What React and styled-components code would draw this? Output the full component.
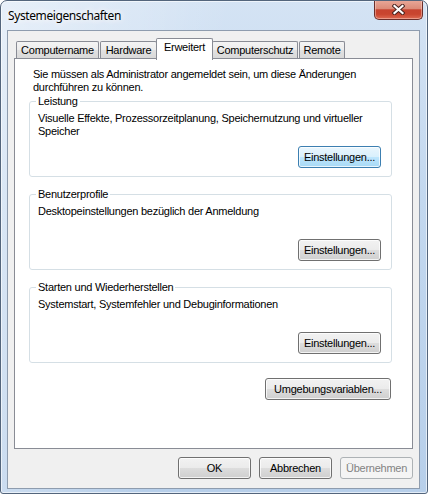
import styled, { createGlobalStyle } from 'styled-components';

const GlobalStyle = createGlobalStyle`
  html, body {
    margin: 0;
    padding: 0;
    background: #fff;
  }
  body {
    font-family: "Liberation Sans", Arial, sans-serif;
    font-size: 11px;
    letter-spacing: -0.25px;
    color: #000;
  }
`;

const Window = styled.div`
  box-sizing: border-box;
  width: 428px;
  height: 494px;
  padding: 0 7px 4px 6px;
  display: flex;
  flex-direction: column;
  border: 1px solid #53657c;
  border-radius: 7px 7px 3px 3px;
  background:
    linear-gradient(100deg, rgba(255, 255, 255, 0.45) 0%, rgba(255, 255, 255, 0) 45%),
    linear-gradient(180deg, #d4e3f4 0%, #c3d8ef 40%, #b7cfea 100%);
  box-shadow: inset 0 0 0 1px rgba(255, 255, 255, 0.6);
  overflow: hidden;
`;

const TitleBar = styled.div`
  height: 29px;
  display: flex;
  align-items: flex-start;
  justify-content: space-between;
`;

const Title = styled.div`
  padding: 7px 0 0 1px;
  font-family: "Noto Sans", "Open Sans", sans-serif;
  font-size: 12px;
  letter-spacing: -0.4px;
  line-height: 16px;
  text-shadow: 0 0 6px #fff, 0 0 10px #fff, 0 0 14px rgba(255, 255, 255, 0.8);
`;

const CloseButton = styled.div`
  box-sizing: border-box;
  width: 49px;
  height: 20px;
  margin: -1px -3px 0 0;
  display: flex;
  align-items: center;
  justify-content: center;
  border: 1px solid #6b2e2a;
  border-top: none;
  border-radius: 0 0 5px 5px;
  background: linear-gradient(180deg, #e9a99a 0%, #dc8b78 45%, #c7432f 52%, #c9452f 75%, #de6a52 100%);
  box-shadow: inset 0 0 0 1px rgba(255, 220, 210, 0.45);
`;

const Client = styled.div`
  flex: 1;
  display: flex;
  flex-direction: column;
  padding: 7px 6px 0;
  border: 1px solid #8e9cae;
  background: #f0f0f0;
`;

const TabRow = styled.div`
  height: 20px;
  display: flex;
  align-items: flex-end;
  gap: 1px;
  padding-left: 2px;
`;

const Tab = styled.div`
  box-sizing: border-box;
  width: ${p => p.$w}px;
  height: ${p => (p.$active ? 22 : 17)}px;
  margin: ${p => (p.$active ? '0 -2px -2px' : '0')};
  padding-bottom: ${p => (p.$active ? 5 : 1)}px;
  display: flex;
  align-items: center;
  justify-content: center;
  border: 1px solid #898c95;
  border-bottom: none;
  border-radius: 2px 2px 0 0;
  background: ${p =>
    p.$active ? '#fff' : 'linear-gradient(180deg, #f4f4f4 0%, #ececec 50%, #e1e1e1 51%, #d9d9d9 100%)'};
  position: ${p => (p.$active ? 'relative' : 'static')};
  z-index: ${p => (p.$active ? 1 : 0)};
  white-space: nowrap;
`;

const Panel = styled.div`
  box-sizing: border-box;
  height: 391px;
  padding: 9px 20px 0 14px;
  display: flex;
  flex-direction: column;
  border: 1px solid #898c95;
  background: #fff;
`;

const Intro = styled.p`
  margin: 0;
  padding: 0 4px;
  line-height: 13px;
`;

const Group = styled.fieldset`
  margin: ${p => (p.$first ? 1 : 11)}px 0 0;
  padding: 4px 10px 8px 8px;
  border: 1px solid #d5dfe5;
  border-radius: 3px;
  min-width: 0;
`;

const Legend = styled.legend`
  margin-left: -2px;
  padding: 0 2px;
  line-height: 13px;
`;

const Desc = styled.p`
  margin: 0;
  min-height: 26px;
  line-height: 13px;
`;

const ButtonRow = styled.div`
  display: flex;
  justify-content: flex-end;
  gap: 8px;
  margin-top: ${p => p.$top || 0}px;
  padding-right: ${p => p.$right || 0}px;
`;

const Button = styled.div`
  box-sizing: border-box;
  width: ${p => p.$w}px;
  height: 22px;
  display: flex;
  align-items: center;
  justify-content: center;
  border: 1px solid ${p => (p.$hot ? '#3c7fb1' : p.$disabled ? '#adb2b5' : '#707070')};
  border-radius: 3px;
  color: ${p => (p.$disabled ? '#838383' : '#000')};
  background: ${p =>
    p.$hot
      ? 'linear-gradient(180deg, #eaf6fd 0%, #d9f0fc 50%, #bee6fd 51%, #a7d9f5 100%)'
      : p.$disabled
      ? '#f4f4f4'
      : 'linear-gradient(180deg, #f2f2f2 0%, #ebebeb 50%, #dddddd 51%, #cfcfcf 100%)'};
  box-shadow: inset 0 0 0 1px ${p => (p.$disabled ? '#f4f4f4' : 'rgba(255, 255, 255, 0.75)')};
  white-space: nowrap;
`;

const CloseIcon = () => (
  <svg width="13" height="11" viewBox="0 0 13 11">
    <path d="M2.5 2 L10.5 9 M10.5 2 L2.5 9" stroke="#4a2420" strokeWidth="4.2" strokeLinecap="square" fill="none" />
    <path d="M2.5 2 L10.5 9 M10.5 2 L2.5 9" stroke="#fff" strokeWidth="2.2" strokeLinecap="square" fill="none" />
  </svg>
);

const tabs = [
  { label: 'Computername', w: 83 },
  { label: 'Hardware', w: 57 },
  { label: 'Erweitert', w: 57, active: true },
  { label: 'Computerschutz', w: 86 },
  { label: 'Remote', w: 46 },
];

const groups = [
  {
    title: 'Leistung',
    text: ['Visuelle Effekte, Prozessorzeitplanung, Speichernutzung und virtueller', 'Speicher'],
    hot: true,
  },
  { title: 'Benutzerprofile', text: ['Desktopeinstellungen bezüglich der Anmeldung'] },
  { title: 'Starten und Wiederherstellen', text: ['Systemstart, Systemfehler und Debuginformationen'] },
];

export default function App() {
  return (
    <>
      <GlobalStyle />
      <Window>
        <TitleBar>
          <Title>Systemeigenschaften</Title>
          <CloseButton>
            <CloseIcon />
          </CloseButton>
        </TitleBar>
        <Client>
          <TabRow>
            {tabs.map(t => (
              <Tab key={t.label} $w={t.w} $active={t.active}>
                {t.label}
              </Tab>
            ))}
          </TabRow>
          <Panel>
            <Intro>
              Sie müssen als Administrator angemeldet sein, um diese Änderungen
              <br />
              durchführen zu können.
            </Intro>
            {groups.map((g, i) => (
              <Group key={g.title} $first={i === 0}>
                <Legend>{g.title}</Legend>
                <Desc>
                  {g.text.map((line, j) => (
                    <span key={j}>
                      {j > 0 && <br />}
                      {line}
                    </span>
                  ))}
                </Desc>
                <ButtonRow $top={8}>
                  <Button $w={83} $hot={g.hot}>Einstellungen...</Button>
                </ButtonRow>
              </Group>
            ))}
            <ButtonRow $top={15} $right={1}>
              <Button $w={126}>Umgebungsvariablen...</Button>
            </ButtonRow>
          </Panel>
          <ButtonRow $top={8}>
            <Button $w={73}>OK</Button>
            <Button $w={73}>Abbrechen</Button>
            <Button $w={73} $disabled>Übernehmen</Button>
          </ButtonRow>
        </Client>
      </Window>
    </>
  );
}
